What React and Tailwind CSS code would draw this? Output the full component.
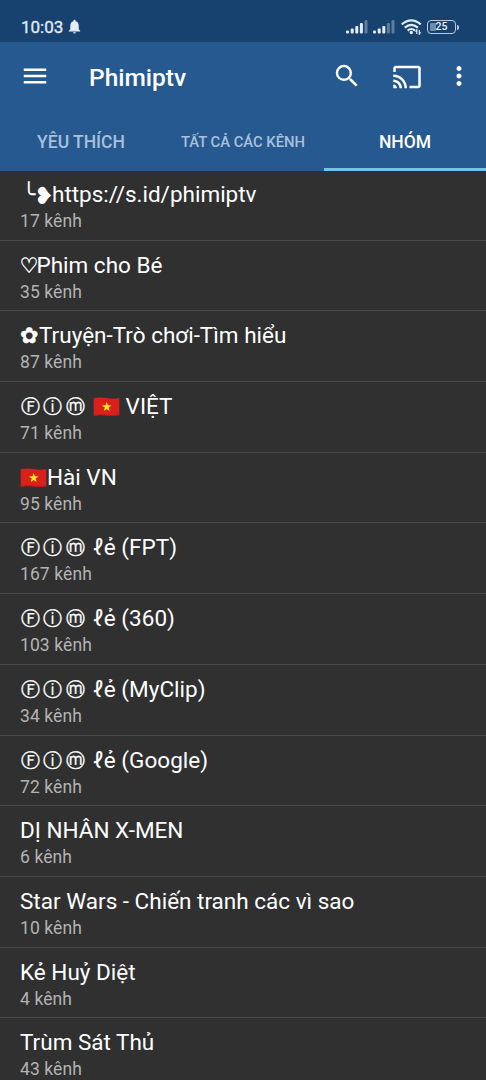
import React from "react";
import { MdCast, MdMenu, MdMoreVert, MdNotifications, MdSearch } from "react-icons/md";

const Symbol = ({ className, children }) => (
  <span className={`inline-block whitespace-pre leading-none ${className}`}>{children}</span>
);

const Flag = () => (
  <svg viewBox="0 0 27 20" className="inline-block h-5 w-[27px] align-[-3px]">
    <path d="M.7 1.3Q7-.3 13.5 1T26.3.9V18.3Q20 19.8 13.5 18.5T.7 19z" fill="#d9201b" />
    <path d="M.7 18.4Q7 17.2 13.5 18.2T26.3 17.8" fill="none" stroke="#a91b16" strokeWidth=".8" />
    <path d="M13.7 4.9l1.2 3.4 3.6.1-2.9 2.2 1 3.5-2.9-2.1-3 2.1 1.1-3.5-2.9-2.2 3.6-.1z" fill="#ffe91f" />
  </svg>
);

const Fim = () => (
  <Symbol className="mr-[5.5px] w-[67.5px] pl-[0.5px] align-[1px] font-['DejaVu_Sans',sans-serif] text-[19px] tracking-[3.9px] [-webkit-text-stroke:0.3px_white]">
    Ⓕⓘⓜ
  </Symbol>
);

const FimLe = ({ name }) => (
  <>
    <Fim />
    <span className="tracking-[0.03px]">ℓẻ ({name})</span>
  </>
);

const groups = [
  {
    title: (
      <>
        <Symbol className="w-[18px] pl-[2px] font-['DejaVu_Sans',sans-serif] text-[22px]">╰</Symbol>
        <Symbol className="-ml-[4px] w-[18px] align-[-1.5px] font-['DejaVu_Sans',sans-serif] text-[23.5px]">❥</Symbol>
        https://s.id/phimiptv
      </>
    ),
    count: 17,
  },
  {
    title: (
      <>
        <Symbol className="-ml-[0.5px] w-[17px] font-['DejaVu_Sans',sans-serif] text-[21px] [-webkit-text-stroke:0.4px_white]">
          ♡
        </Symbol>
        Phim cho Bé
      </>
    ),
    count: 35,
  },
  {
    title: (
      <>
        <Symbol className="w-[19px] font-['DejaVu_Sans',sans-serif] text-[22px] [-webkit-text-stroke:0.5px_white]">
          ✿
        </Symbol>
        Truyện-Trò chơi-Tìm hiểu
      </>
    ),
    count: 87,
  },
  { title: <><Fim /><Flag /> VIỆT</>, count: 71 },
  { title: <><Flag />Hài VN</>, count: 95 },
  { title: <FimLe name="FPT" />, count: 167 },
  { title: <FimLe name="360" />, count: 103 },
  { title: <FimLe name="MyClip" />, count: 34 },
  { title: <FimLe name="Google" />, count: 72 },
  { title: "DỊ NHÂN X-MEN", count: 6 },
  { title: "Star Wars - Chiến tranh các vì sao", count: 10 },
  { title: "Kẻ Huỷ Diệt", count: 4 },
  { title: "Trùm Sát Thủ", count: 43 },
];

const Signal = ({ bars }) => (
  <svg viewBox="0 0 22 14" className="h-[14px] w-[22px]" fill="#e3ebf3">
    <rect x="0" y="10.5" width="3" height="3" rx="1" />
    <rect x="4.7" y="8.5" width="3" height="5" rx="1" />
    <rect x="9.3" y="6" width="3" height="7.5" rx="1" />
    <rect x="13.9" y="3" width="3" height="10.5" rx="1" opacity={bars > 3 ? 1 : 0.35} />
    <rect x="18.5" y="0" width="3" height="13.5" rx="1" opacity="0.35" />
  </svg>
);

const Wifi = () => (
  <svg viewBox="0 0 21 16" className="h-4 w-[21px]" fill="none" stroke="#e3ebf3" strokeWidth="2.1">
    <path d="M.8 5.4Q10.3-2.7 19.8 5.4" />
    <path d="M3.7 8.6Q10.3 3 16.9 8.6" />
    <path d="M6.6 11.6Q10.3 8.4 14 11.6" />
    <circle cx="10.3" cy="13.5" r="1.7" fill="#e3ebf3" stroke="none" />
    <path d="M15.8 15v-4l-1.3 1.6M18.3 11v4l1.3-1.6" strokeWidth="1.2" />
  </svg>
);

const Battery = () => (
  <div className="flex items-center">
    <div className="relative flex h-[14.5px] w-[29px] items-center justify-center rounded-[4px] border-[1.5px] border-[#bdcbdc] text-[10.5px] font-medium leading-none text-[#e9eff6]">
      <span className="absolute left-[2px] top-[2px] h-[8px] w-[6px] rounded-[1px] bg-[#6f8dab]" />
      <span className="relative">25</span>
    </div>
    <span className="ml-px h-[5px] w-[2px] rounded-r bg-[#bdcbdc]" />
  </div>
);

const StatusBar = () => (
  <div className="flex h-[42px] shrink-0 items-end justify-between bg-[#17426f] pb-[7px] pl-[21px] pr-[27px] text-[#e3ebf3]">
    <div className="flex items-center">
      <span className="text-[17px] leading-[14px] [-webkit-text-stroke:0.3px_#e3ebf3]">10:03</span>
      <MdNotifications className="ml-[3px] h-[17px] w-[17px]" />
    </div>
    <div className="flex items-center gap-[5.5px]">
      <Signal bars={4} />
      <Signal bars={3} />
      <Wifi />
      <Battery />
    </div>
  </div>
);

const Toolbar = () => (
  <div className="flex h-[70px] items-center pb-[2px] pl-5 pr-[12px] text-white">
    <MdMenu className="h-[30px] w-[30px]" />
    <h1 className="ml-[39px] flex-1 pt-[4px] text-[24.5px] font-medium leading-none">Phimiptv</h1>
    <MdSearch className="h-[30px] w-[30px]" />
    <MdCast className="ml-[30px] mt-px h-[30px] w-[30px]" />
    <MdMoreVert className="ml-[22px] h-[30px] w-[30px]" />
  </div>
);

const Tabs = () => (
  <div className="grid h-[59px] grid-cols-3 text-center font-medium text-[#a9c1dc]">
    <div className="flex items-center justify-center pt-px text-[17.5px]">YÊU THÍCH</div>
    <div className="flex items-center justify-center pt-px text-[14.8px]">TẤT CẢ CÁC KÊNH</div>
    <div className="flex items-center justify-center border-b-[3px] border-[#79c1e8] pt-[4px] text-[17.5px] text-white">
      NHÓM
    </div>
  </div>
);

const App = () => {
  return (
    <div className="flex h-[1080px] w-[486px] flex-col overflow-hidden bg-[#303030] font-[Roboto,sans-serif]">
      <StatusBar />
      <header className="shrink-0 bg-[#25598f]">
        <Toolbar />
        <Tabs />
      </header>
      <ul className="-mt-px">
        {groups.map((group, i) => (
          <li key={i} className="h-[70.7px] border-b border-[#484848] pl-5 pt-[10px]">
            <p className="h-[28px] whitespace-nowrap text-[22.5px] leading-[28px] text-white">{group.title}</p>
            <p className="pt-px text-[17.5px] leading-[25px] tracking-[0.1px] text-[#b3b3b3]">{group.count} kênh</p>
          </li>
        ))}
      </ul>
    </div>
  );
};

export default App;
